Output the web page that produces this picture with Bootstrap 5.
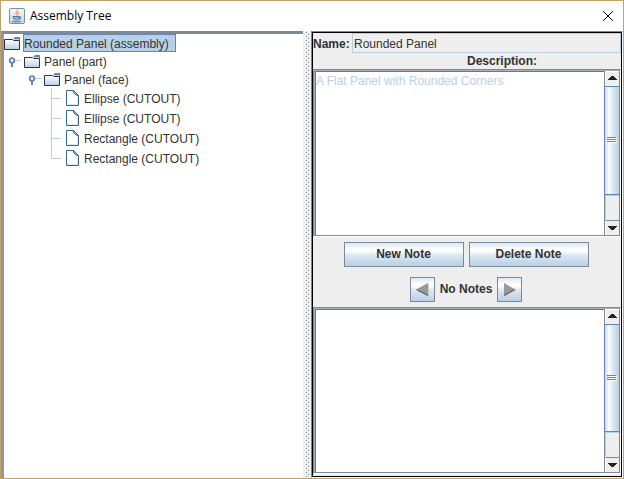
<!DOCTYPE html>
<html lang="en">
<head>
<meta charset="utf-8">
<meta name="viewport" content="width=device-width, initial-scale=1">
<title>Assembly Tree</title>
<link href="https://cdn.jsdelivr.net/npm/bootstrap@5.3.0/dist/css/bootstrap.min.css" rel="stylesheet">
<style>
body { font: 12px/18px "Liberation Sans", Arial, sans-serif; color: #333; background: #fff; }
.frame { border: 1px solid #c4a06c; }
.titlebar { height: 30px; padding: 0 9px 0 8px; color: #000; }
.titlebar h1 { font: 400 12px/18px "Noto Sans", "Open Sans", sans-serif; font-family: "Open Sans", "Noto Sans", sans-serif; margin-left: 5px; }
.content { min-height: 0; }
svg { display: block; flex: none; }
.tree-pane { border: solid #9a9a9c; border-top-color: #808890; border-left-color: #8f969f; border-width: 3px 0 0 3px; }
.tree-pane > ul { min-width: max-content; }
.branch { padding-left: 20px; }
.node { height: 18px; }
.leaf { height: 20px; }
.node-label { padding: 2px 3px 0; margin-left: 1px; }
.picked { background: #b8cfe5; border: 1px solid #6382bf; line-height: 14px; padding: 2px 6px 0 0; margin-left: 3px; }
.divider { width: 8px; background: #eee; }
.divider svg { width: 8px; height: 100%; }
.side { flex: 0 0 calc(50% + 1px); min-width: 0; background: #eee; border: 1px solid #fff; border-top-color: #7a8a99; border-left-color: #7a8a99; }
.side-inner { border: 1px solid #000; padding-bottom: 2px; min-width: 0; }
.strong { font-weight: 700; font-size: 12px; line-height: 16px; }
.desc { padding-left: 50%; }
.name-field { height: 20px; border: 1px solid #b8cfe5; background: #eee; color: #333; padding: 1px 1px 0; min-width: 0; outline: 0; }
.name-row label { width: 39px; padding-top: 1px; }
.scroll { flex: 1 1 0; border: 1px solid #7a8a99; border-right-color: #fff; border-bottom-color: #fff; background: #fff; min-height: 0; }
.scroll-in { border: 1px solid #a9b0b8; border-right-color: #7a8a99; border-bottom-color: #7a8a99; min-width: 0; }
.note-text { border: 0; border-left: 1px solid #80736f; border-top: 1px solid #80736f; resize: none; padding: 0; color: #b8cfe5; background: #fff; line-height: 18px; min-width: 0; outline: 0; overflow: hidden; }
.bar { width: 15px; background: #eee; border-left: 1px solid #7a8a99; }
.arrow { height: 15px; border: 0; border-left: 1px solid #fff; border-top: 1px solid #fff; background: #eee; padding: 0; overflow: hidden; }
.arrow-down { border-top-color: #7a8a99; }
.thumb { background: linear-gradient(90deg, #c8dbee, #fff 30%, #e8f0f8 42%, #b8cfe5); border: 1px solid #6382bf; border-right: 0; margin-left: -1px; flex: 109 1 0; }
.thumb-tail { flex: 24 1 0; border-left: 1px solid #b8cfe5; border-top: 1px solid #b8cfe5; }
.metal { height: 25px; color: #333; border: 1px solid #7a8a99; background: linear-gradient(#dde8f3, #fff 30%, #fff 34%, #dde8f3 52%, #b8cfe5); padding: 0; }
.wide { width: 120px; }
.square { width: 25px; }
.tools { padding: 5px 2px 5px 0; gap: 10px; }
.tool-row { gap: 5px; }
</style>
<script src="https://cdn.jsdelivr.net/npm/bootstrap@5.3.0/dist/js/bootstrap.bundle.min.js"></script>
</head>
<body>
<svg width="0" height="0" class="position-absolute" aria-hidden="true">
  <defs>
    <linearGradient id="fold" x1="0" y1="0" x2="0" y2="1"><stop offset="0" stop-color="#fff"/><stop offset="1" stop-color="#b8cfe5"/></linearGradient>
    <linearGradient id="cupbox" x1="0" y1="0" x2="0" y2="1"><stop offset="0" stop-color="#fafafa"/><stop offset="1" stop-color="#c9d3dc"/></linearGradient>
    <symbol id="folder" viewBox="0 0 16 18">
      <path d="M.5 5.500h8l1 1h6v9H.5z" fill="url(#fold)" stroke="#333"/>
      <path d="M9 5l2-2h5v3h-1V5z" fill="#6382bf"/>
      <path d="M10 5.500h5" stroke="#b8cfe5"/>
    </symbol>
    <symbol id="sheet" viewBox="0 0 16 20">
      <path d="M2.500 2.500h7l5 5v10h-12z" fill="#fff" stroke="#336699"/>
      <path d="M4 16.500h9.500V9" fill="none" stroke="#dce9f5"/>
      <path d="M9.500 2.500v2l2 2 3 1.500z" fill="#b8cfe5" stroke="#336699"/>
    </symbol>
    <symbol id="handle" viewBox="0 0 20 18">
      <path d="M11 8.500h6" stroke="#b8cfe5"/><path d="M8 10v5" stroke="#6382bf" stroke-width="2"/>
      <circle cx="8" cy="8.500" r="2.300" fill="#fff" stroke="#6382bf" stroke-width="1.800"/>
    </symbol>
    <symbol id="tee" viewBox="0 0 20 20"><path d="M7.500 0v20M8 10.500h9" stroke="#b8cfe5"/></symbol>
    <symbol id="ell" viewBox="0 0 20 20"><path d="M7.500 0v10.500H17" fill="none" stroke="#b8cfe5"/></symbol>
    <symbol id="grip" viewBox="0 0 10 6"><path d="M0 .5h9M0 2.500h9M0 4.500h9" stroke="#6382bf"/><path d="M1 1.500h9M1 3.500h9M1 5.500h9" stroke="#fff"/></symbol>
    <symbol id="up" viewBox="0 0 14 14"><path d="M2 8h9V7h-1V6H9V5H8V4H5v1H4v1H3v1H2z" fill="#222"/></symbol>
    <symbol id="down" viewBox="0 0 14 14"><path d="M2 5h9v1h-1v1H9v1H8v1H5V8H4V7H3V6H2z" fill="#222"/></symbol>
  </defs>
</svg>
<div class="frame vh-100 d-flex flex-column">
  <header class="titlebar d-flex align-items-center">
    <svg width="16" height="16" viewBox="0 0 16 16" aria-hidden="true">
      <rect x=".5" y=".5" width="15" height="15" rx="1.500" fill="url(#cupbox)" stroke="#7890a4"/>
      <path d="M8.500 1.500c1 1.500-2 2.500-1.500 4 .2.700 1 1 1 2M10 4c-1.500.8-1.500 1.500-.8 2.500" fill="none" stroke="#e8762c"/>
      <path d="M4 8.500h6.500v1.500c0 1.500-1 2-3 2S4.500 11 4 8.500zM10.500 9c2.500-.5 2 1.700-.5 2M3 13.200c3 1 7 .8 9-.2" fill="none" stroke="#4f7a9c"/>
      <path d="M5 10h5" stroke="#4f7a9c"/>
    </svg>
    <h1 class="mb-0">Assembly Tree</h1>
    <button type="button" class="btn p-0 border-0 rounded-0 ms-auto" aria-label="Close">
      <svg width="12" height="12" viewBox="0 0 12 12"><path d="M1 1l10 10M11 1L1 11" stroke="#000"/></svg>
    </button>
  </header>
  <main class="content d-flex flex-fill">
    <nav class="tree-pane flex-fill overflow-hidden" aria-label="Assembly">
      <ul class="list-unstyled mb-0">
        <li>
          <div class="node d-flex align-items-center"><svg width="16" height="18"><use href="#folder"/></svg><span class="node-label picked">Rounded Panel (assembly)</span></div>
          <ul class="list-unstyled">
            <li>
              <div class="node d-flex align-items-center"><svg width="20" height="18"><use href="#handle"/></svg><svg width="16" height="18"><use href="#folder"/></svg><span class="node-label">Panel (part)</span></div>
              <ul class="list-unstyled branch">
                <li>
                  <div class="node d-flex align-items-center"><svg width="20" height="18"><use href="#handle"/></svg><svg width="16" height="18"><use href="#folder"/></svg><span class="node-label">Panel (face)</span></div>
                  <ul class="list-unstyled branch">
                    <li class="leaf d-flex align-items-center"><svg width="20" height="20"><use href="#tee"/></svg><svg width="16" height="20"><use href="#sheet"/></svg><span class="node-label">Ellipse (CUTOUT)</span></li>
                    <li class="leaf d-flex align-items-center"><svg width="20" height="20"><use href="#tee"/></svg><svg width="16" height="20"><use href="#sheet"/></svg><span class="node-label">Ellipse (CUTOUT)</span></li>
                    <li class="leaf d-flex align-items-center"><svg width="20" height="20"><use href="#tee"/></svg><svg width="16" height="20"><use href="#sheet"/></svg><span class="node-label">Rectangle (CUTOUT)</span></li>
                    <li class="leaf d-flex align-items-center"><svg width="20" height="20"><use href="#ell"/></svg><svg width="16" height="20"><use href="#sheet"/></svg><span class="node-label">Rectangle (CUTOUT)</span></li>
                  </ul>
                </li>
              </ul>
            </li>
          </ul>
        </li>
      </ul>
    </nav>
    <div class="divider" role="separator" aria-orientation="vertical">
      <svg aria-hidden="true"><defs><pattern id="dots" width="8" height="4" patternUnits="userSpaceOnUse"><path d="M3 1h1v1H3zM5 3h1v1H5z" fill="#7a8a99"/><path d="M4 2h1v1H4zM6 0h1v1H6z" fill="#fff"/></pattern></defs><rect width="100%" height="100%" fill="url(#dots)"/></svg>
    </div>
    <section class="side d-flex">
      <div class="side-inner flex-fill d-flex flex-column">
        <div class="name-row d-flex align-items-center">
          <label for="part-name" class="strong">Name:</label>
          <input id="part-name" class="name-field flex-fill" type="text" value="Rounded Panel" readonly>
        </div>
        <label for="description" class="strong desc">Description:</label>
        <div class="scroll d-flex">
          <div class="scroll-in d-flex flex-fill">
            <textarea id="description" class="note-text flex-fill" readonly>A Flat Panel with Rounded Corners</textarea>
            <div class="bar d-flex flex-column">
              <button type="button" class="arrow" aria-label="Scroll up"><svg width="14" height="14"><use href="#up"/></svg></button>
              <div class="thumb d-flex align-items-center justify-content-center"><svg width="10" height="6"><use href="#grip"/></svg></div>
              <div class="thumb-tail"></div>
              <button type="button" class="arrow arrow-down" aria-label="Scroll down"><svg width="14" height="14"><use href="#down"/></svg></button>
            </div>
          </div>
        </div>
        <div class="tools d-flex flex-column">
          <div class="tool-row d-flex justify-content-center">
            <button type="button" class="metal wide strong">New Note</button>
            <button type="button" class="metal wide strong">Delete Note</button>
          </div>
          <div class="tool-row d-flex justify-content-center align-items-center">
            <button type="button" class="metal square d-flex align-items-center justify-content-center" aria-label="Previous note"><svg width="15" height="15" viewBox="0 0 15 15"><path d="M14 2v13L3 8z" fill="#ccc"/><path d="M13 1v13L1 7.500z" fill="#999"/><path d="M1.500 7.800L13 13.500" stroke="#555"/></svg></button>
            <span class="strong">No Notes</span>
            <button type="button" class="metal square d-flex align-items-center justify-content-center" aria-label="Next note"><svg width="15" height="15" viewBox="0 0 15 15"><path d="M3 2l11 6L3 15z" fill="#ccc"/><path d="M2 1v13l11-6.500z" fill="#999"/><path d="M2 13.500L13 7.500" stroke="#555"/></svg></button>
          </div>
        </div>
        <div class="scroll d-flex">
          <div class="scroll-in d-flex flex-fill">
            <textarea class="note-text flex-fill" aria-label="Note" readonly></textarea>
            <div class="bar d-flex flex-column">
              <button type="button" class="arrow" aria-label="Scroll up"><svg width="14" height="14"><use href="#up"/></svg></button>
              <div class="thumb d-flex align-items-center justify-content-center"><svg width="10" height="6"><use href="#grip"/></svg></div>
              <div class="thumb-tail"></div>
              <button type="button" class="arrow arrow-down" aria-label="Scroll down"><svg width="14" height="14"><use href="#down"/></svg></button>
            </div>
          </div>
        </div>
      </div>
    </section>
  </main>
</div>
</body>
</html>
